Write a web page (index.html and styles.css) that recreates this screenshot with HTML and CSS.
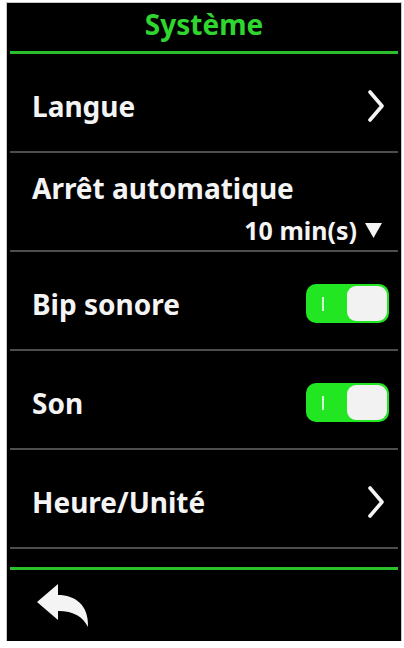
FILE: index.html
```html
<!DOCTYPE html>
<html lang="fr">
<head>
  <meta charset="UTF-8" />
  <title>Système</title>
  <link rel="stylesheet" href="styles.css">
</head>
<body>

  <div class="screen">

    <!-- Header -->
    <div class="title">Système</div>
    <div class="rule-green"></div>

    <!-- Settings list -->
    <ul class="menu">
      <li class="item">
        <span class="label">Langue</span>
        <svg class="chevron" width="18" height="32" viewBox="0 0 18 32">
          <polyline points="3,2 15,16 3,30" fill="none" stroke="#f4f4f4" stroke-width="3.6" stroke-linejoin="round" stroke-linecap="round"/>
        </svg>
      </li>
      <li class="item item-select">
        <span class="label">Arrêt automatique</span>
        <span class="value">10 min(s)
          <svg class="caret" width="17" height="16" viewBox="0 0 17 16">
            <polygon points="0,1 17,1 8.5,16" fill="#f4f4f4"/>
          </svg>
        </span>
      </li>
      <li class="item">
        <span class="label">Bip sonore</span>
        <span class="toggle"><span class="toggle-mark"></span><span class="toggle-knob"></span></span>
      </li>
      <li class="item">
        <span class="label">Son</span>
        <span class="toggle"><span class="toggle-mark"></span><span class="toggle-knob"></span></span>
      </li>
      <li class="item">
        <span class="label">Heure/Unité</span>
        <svg class="chevron" width="18" height="32" viewBox="0 0 18 32">
          <polyline points="3,2 15,16 3,30" fill="none" stroke="#f4f4f4" stroke-width="3.6" stroke-linejoin="round" stroke-linecap="round"/>
        </svg>
      </li>
    </ul>

    <!-- Footer -->
    <div class="rule-green rule-bottom"></div>
    <div class="footer">
      <svg class="back" width="54" height="46" viewBox="0 0 54 46">
        <path d="M0 19 L21 1 V12 C38 12 52 22 51 44 C46 34 37 28 21 28 V37 Z" fill="#f4f4f4"/>
      </svg>
    </div>

  </div>

</body>
</html>
```

FILE: styles.css
```css
/* Basic Reset */
* {
  margin: 0;
  padding: 0;
  box-sizing: border-box;
}

body {
  background: #fff;
}

/* Device screen */
.screen {
  margin: 3px 0 0 7px;
  width: 394px;
  height: 638px;
  background: #000;
  box-shadow: 0 0 0 1px #c8c8c8;
  display: flex;
  flex-direction: column;
  font-family: "Noto Sans", "DejaVu Sans Condensed", sans-serif;
  font-weight: bold;
  color: #f4f4f4;
}

/* Header */
.title {
  height: 48px;
  padding-top: 4px;
  font-size: 28px;
  line-height: 34px;
  text-align: center;
  color: #2fd62f;
}

.rule-green {
  height: 3px;
  margin: 0 3px;
  background: #2cbf2c;
}

.rule-bottom {
  margin-top: 18px;
}

/* Settings list */
.menu {
  list-style-type: none;
}

.item {
  height: 99px;
  margin: 0 3px;
  padding: 6px 13px 0 22px;
  border-bottom: 2px solid #4d4d4d;
  display: flex;
  align-items: center;
  justify-content: space-between;
}

.label {
  font-size: 28px;
  line-height: 34px;
}

.item-select {
  flex-direction: column;
  align-items: stretch;
  justify-content: flex-start;
  padding-top: 18px;
}

.value {
  align-self: flex-end;
  margin: 11px 3px 0 0;
  font-size: 25px;
  line-height: 28px;
  display: flex;
  align-items: center;
  gap: 8px;
}

/* Toggle switch */
.toggle {
  width: 83px;
  height: 39px;
  margin-right: -4px;
  padding: 2px 2px 2px 16px;
  border-radius: 10px;
  background: #22e622;
  display: flex;
  align-items: center;
  justify-content: space-between;
}

.toggle-mark {
  width: 2px;
  height: 14px;
  background: rgba(255, 255, 255, 0.8);
}

.toggle-knob {
  width: 40px;
  height: 35px;
  border-radius: 9px;
  background: #f2f2f2;
}

/* Footer */
.footer {
  flex: 1;
  padding-left: 30px;
  display: flex;
  align-items: center;
}
```
